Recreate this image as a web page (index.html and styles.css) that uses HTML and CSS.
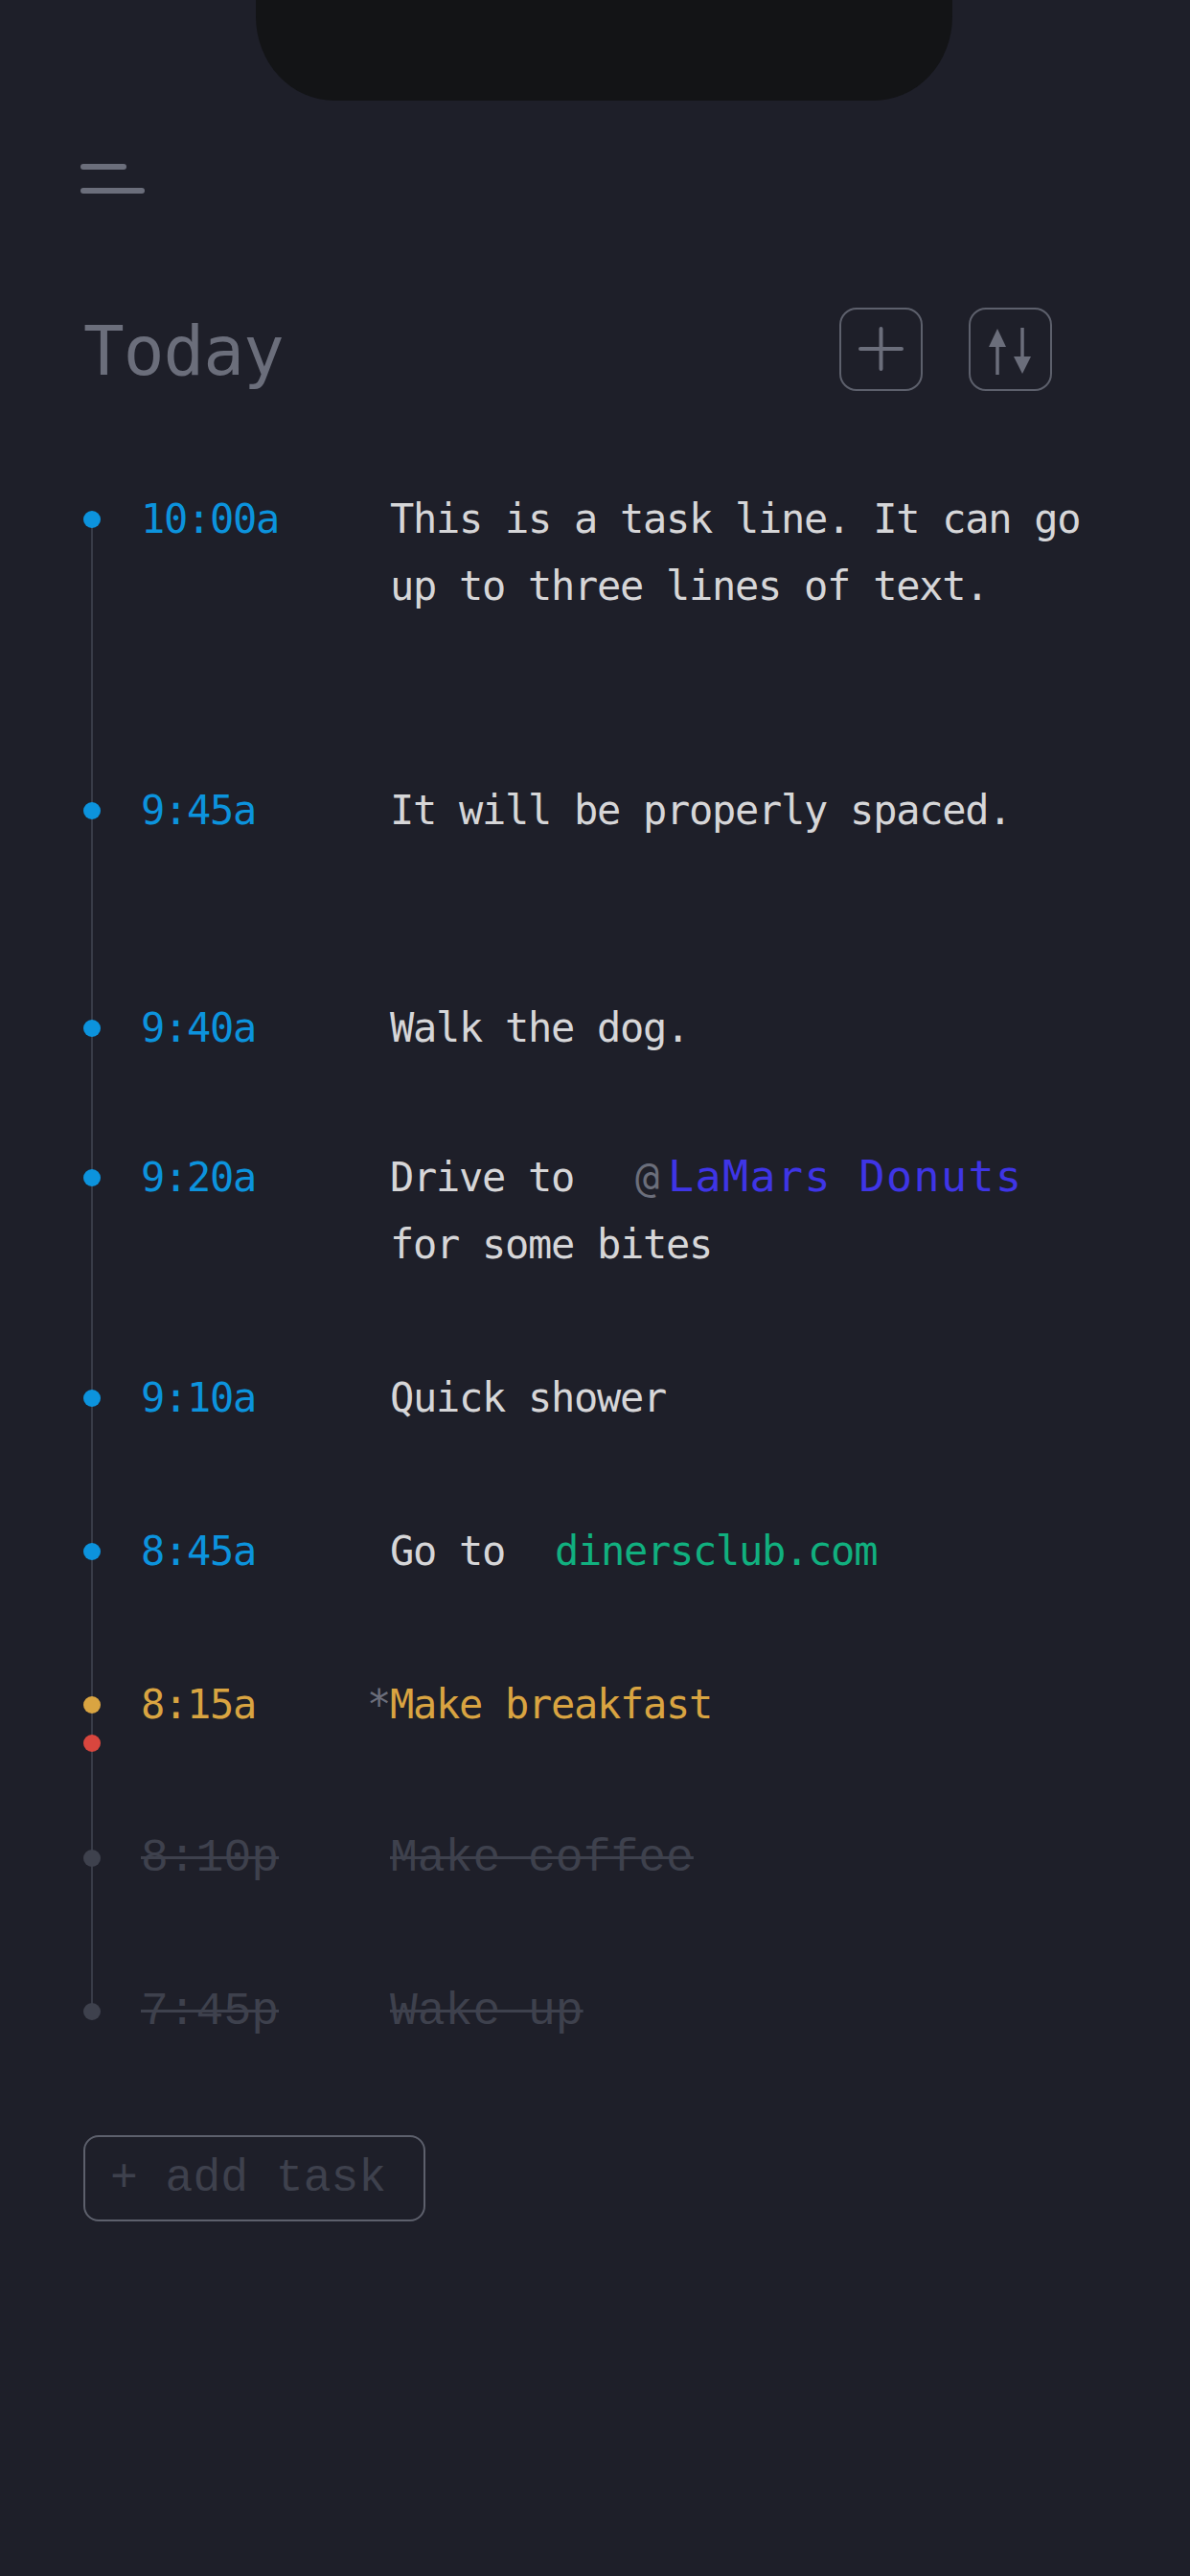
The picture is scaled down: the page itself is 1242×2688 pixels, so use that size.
FILE: index.html
```html
<!DOCTYPE html>
<html lang="en">
<head>
<meta charset="utf-8">
<title>Today</title>
<link rel="stylesheet" href="styles.css">
</head>
<body>
<div class="screen">
  <div class="notch"></div>
  <header class="topbar">
    <div class="menu" aria-label="Menu">
      <span class="bar bar-short"></span>
      <span class="bar bar-long"></span>
    </div>
  </header>

  <div class="title-row">
    <h1 class="title">Today</h1>
    <div class="actions">
      <button class="icon-btn" aria-label="Add">
        <svg viewBox="0 0 83 83" width="83" height="83">
          <path d="M20 41H63M41.5 20V62" stroke="#6b6e7b" stroke-width="4" stroke-linecap="round" fill="none"/>
        </svg>
      </button>
      <button class="icon-btn" aria-label="Sort">
        <svg viewBox="0 0 83 83" width="83" height="83">
          <path d="M28 36V68M54 19V52" stroke="#6b6e7b" stroke-width="3.5" fill="none"/>
          <polygon points="28,20 19,39 37,39" fill="#6b6e7b"/>
          <polygon points="45,49 63,49 54,67" fill="#6b6e7b"/>
        </svg>
      </button>
    </div>
  </div>

  <ol class="timeline">
    <li class="task task--tall">
      <div class="marker"><span class="dot"></span></div>
      <span class="time">10:00a</span>
      <p class="text">This is a task line. It can go up to three lines of text.</p>
    </li>
    <li class="task task--spaced">
      <div class="marker"><span class="dot"></span></div>
      <span class="time">9:45a</span>
      <p class="text">It will be properly spaced.</p>
    </li>
    <li class="task task--tight">
      <div class="marker"><span class="dot"></span></div>
      <span class="time">9:40a</span>
      <p class="text">Walk the dog.</p>
    </li>
    <li class="task">
      <div class="marker"><span class="dot"></span></div>
      <span class="time">9:20a</span>
      <p class="text">Drive to <span class="mention"><span class="at">@</span><span class="place">LaMars Donuts</span></span> for some bites</p>
    </li>
    <li class="task">
      <div class="marker"><span class="dot"></span></div>
      <span class="time">9:10a</span>
      <p class="text">Quick shower</p>
    </li>
    <li class="task">
      <div class="marker"><span class="dot"></span></div>
      <span class="time">8:45a</span>
      <p class="text">Go to <span class="link">dinersclub.com</span></p>
    </li>
    <li class="task task--active">
      <div class="marker"><span class="dot"></span><span class="dot dot--now"></span></div>
      <span class="time">8:15a</span>
      <p class="text"><span class="star">*</span>Make breakfast</p>
    </li>
    <li class="task task--done">
      <div class="marker"><span class="dot"></span></div>
      <span class="time">8:10p</span>
      <p class="text">Make coffee</p>
    </li>
    <li class="task task--done task--last">
      <div class="marker"><span class="dot"></span></div>
      <span class="time">7:45p</span>
      <p class="text">Wake up</p>
    </li>
  </ol>

  <button class="add-task">+ add task</button>
</div>
</body>
</html>
```

FILE: styles.css
```css
html, body {
  margin: 0;
  padding: 0;
  background: #1e1f29;
}

.screen {
  position: relative;
  width: 1242px;
  height: 2688px;
  box-sizing: border-box;
  padding-left: 86px;
  background: #1e1f29;
  font-family: "DejaVu Sans Mono", monospace;
  overflow: hidden;
}

.notch {
  position: absolute;
  left: 267px;
  top: 0;
  width: 727px;
  height: 105px;
  background: #131416;
  border-radius: 0 0 82px 82px / 0 0 88px 88px;
}

.topbar {
  padding-top: 171px;
}

.menu {
  display: flex;
  flex-direction: column;
  gap: 19px;
  margin-left: -2px;
  width: 67px;
}

.bar {
  display: block;
  height: 6px;
  border-radius: 3px;
  background: #6b6e7b;
}

.bar-short { width: 48px; }
.bar-long { width: 67px; }

.title-row {
  display: flex;
  align-items: center;
  justify-content: space-between;
  margin-top: 119px;
  height: 87px;
  padding-right: 144px;
}

.title {
  margin: 0 0 0 1px;
  padding-top: 4px;
  font-family: "DejaVu Sans Mono", monospace;
  font-weight: normal;
  font-size: 71px;
  letter-spacing: -1px;
  line-height: 1;
  color: #6b6e7b;
}

.actions {
  display: flex;
  gap: 48px;
}

.icon-btn {
  width: 87px;
  height: 87px;
  box-sizing: border-box;
  padding: 0;
  border: 2px solid #5d606c;
  border-radius: 18px;
  background: transparent;
  display: flex;
  align-items: center;
  justify-content: center;
}

.icon-btn svg {
  display: block;
}

.timeline {
  position: relative;
  list-style: none;
  margin: 99px 0 0 1px;
  padding: 0;
}

.timeline::before {
  content: "";
  position: absolute;
  left: 8px;
  top: 35px;
  bottom: 35px;
  width: 2px;
  background: #383b47;
}

.task {
  display: grid;
  grid-template-columns: 60px 260px 740px;
  align-items: start;
  padding-bottom: 90px;
  font-family: "DejaVu Sans Mono", monospace;
  font-size: 42px;
  letter-spacing: -1.28px;
  line-height: 70px;
  color: #d6d6d8;
}

.task--tall { padding-bottom: 164px; }
.task--spaced { padding-bottom: 157px; }
.task--tight { padding-bottom: 86px; }
.task--last { padding-bottom: 0; }

.marker {
  display: flex;
  flex-direction: column;
  align-items: flex-start;
  height: 70px;
}

.dot {
  position: relative;
  z-index: 1;
  display: block;
  flex: none;
  width: 18px;
  height: 18px;
  margin-top: 26px;
  border-radius: 50%;
  background: #0c93dd;
}

.dot--now {
  margin-top: 22px;
  background: #d9463e;
}

.time {
  color: #0c93dd;
}

.text {
  margin: 0;
}

.mention {
  margin-left: 40px;
}

.at {
  color: #6b6e7b;
  margin-right: 10px;
}

.place {
  font-size: 45px;
  letter-spacing: 1.4px;
  line-height: 1;
  color: #3f35e6;
}

.link {
  margin-left: 28px;
  color: #11b07f;
}

.star {
  margin-left: -24px;
  color: #6b6e7b;
}

.task--active .time,
.task--active .text {
  color: #d9a441;
}

.task--active .dot:first-child {
  background: #d9a441;
}

.task--done .dot {
  background: #3e414d;
}

.task--done .time,
.task--done .text {
  font-family: "Liberation Mono", monospace;
  font-size: 48px;
  letter-spacing: 0;
  color: #3e414d;
  text-decoration: line-through;
  text-decoration-thickness: 3px;
}

.add-task {
  display: block;
  margin: 94px 0 0 1px;
  height: 90px;
  box-sizing: border-box;
  padding: 0 39px 0 26px;
  border: 2px solid #5d606c;
  border-radius: 16px;
  background: transparent;
  font-family: "Liberation Mono", monospace;
  font-size: 48px;
  line-height: 86px;
  color: #3e414d;
  text-align: left;
}
```
